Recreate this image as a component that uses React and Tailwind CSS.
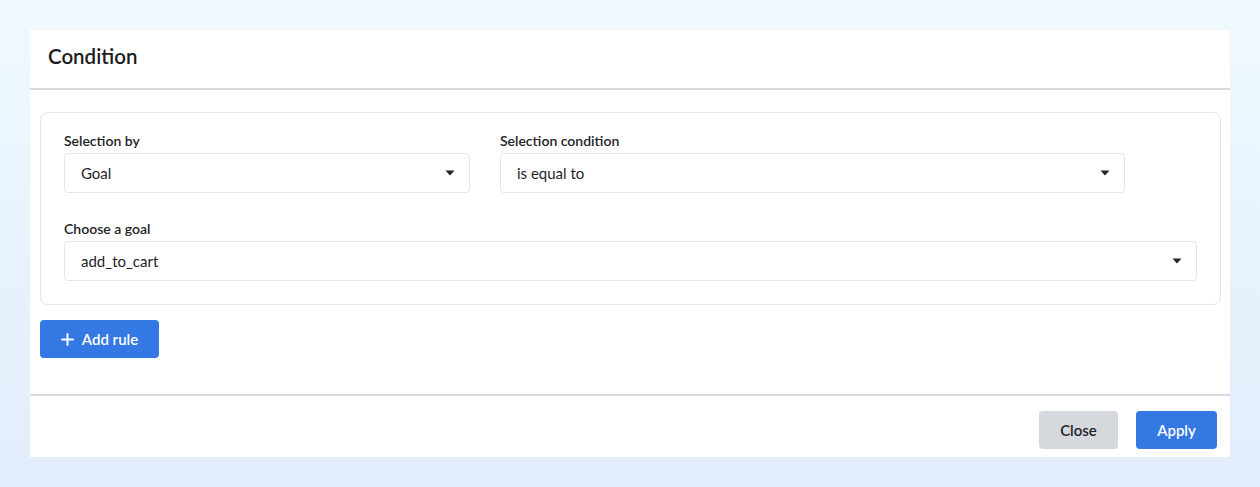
import React from "react";

function Caret() {
  return (
    <svg width="10" height="6" viewBox="0 0 10 6" className="shrink-0">
      <path d="M0.5 0.5 L9.5 0.5 L5 5.5 Z" fill="#1f2328" />
    </svg>
  );
}

function Select({ value, className }) {
  return (
    <div
      className={`flex items-center justify-between h-[40px] pl-[16px] pr-[14px] bg-white border border-[#e3e5e9] rounded-[4px] text-[15px] text-[#1f2328] ${className}`}
    >
      <span>{value}</span>
      <Caret />
    </div>
  );
}

function Label({ children }) {
  return (
    <div className="text-[14px] font-semibold text-[#1f2328] leading-[20px] mb-[2px]">
      {children}
    </div>
  );
}

export default function App() {
  return (
    <div
      className="w-[1260px] h-[487px] bg-gradient-to-b from-[#eff9fe] to-[#e2ecfc] pt-[30px] px-[30px]"
      style={{ fontFamily: "Lato, 'Noto Sans', sans-serif" }}
    >
      <div className="bg-white h-[427px] flex flex-col">
        <div className="h-[60px] shrink-0 flex items-center px-[18px] pb-[6px] border-b-2 border-[#d9dbe0]">
          <h1 className="text-[20.5px] font-semibold text-[#1a1d21]">Condition</h1>
        </div>

        <div className="flex-1 pl-[10px] pr-[9px] pt-[22px] border-b-2 border-[#d9dbe0]">
          <div className="border border-[#e3e5e9] rounded-[8px] pl-[23px] pr-[23px] pt-[18px] pb-[23px]">
            <div className="flex gap-[30px]">
              <div className="w-[406px]">
                <Label>Selection by</Label>
                <Select value="Goal" />
              </div>
              <div className="w-[625px]">
                <Label>Selection condition</Label>
                <Select value="is equal to" />
              </div>
            </div>
            <div className="mt-[26px]">
              <Label>Choose a goal</Label>
              <Select value="add_to_cart" />
            </div>
          </div>

          <button className="mt-[15px] h-[38px] w-[119px] flex items-center justify-center gap-[8px] bg-[#3478e4] rounded-[4px] text-white text-[15px] font-semibold">
            <svg width="13" height="13" viewBox="0 0 13 13">
              <path d="M6.5 1 V12 M1 6.5 H12" stroke="white" strokeWidth="2" strokeLinecap="round" />
            </svg>
            Add rule
          </button>
        </div>

        <div className="h-[61px] shrink-0 flex items-start justify-end gap-[18px] pt-[15px] pr-[13px]">
          <button className="h-[38px] w-[79px] bg-[#d5d8dd] rounded-[4px] text-[15px] font-semibold text-[#1f2328]">
            Close
          </button>
          <button className="h-[38px] w-[81px] bg-[#3478e4] rounded-[4px] text-[15px] font-semibold text-white">
            Apply
          </button>
        </div>
      </div>
    </div>
  );
}
